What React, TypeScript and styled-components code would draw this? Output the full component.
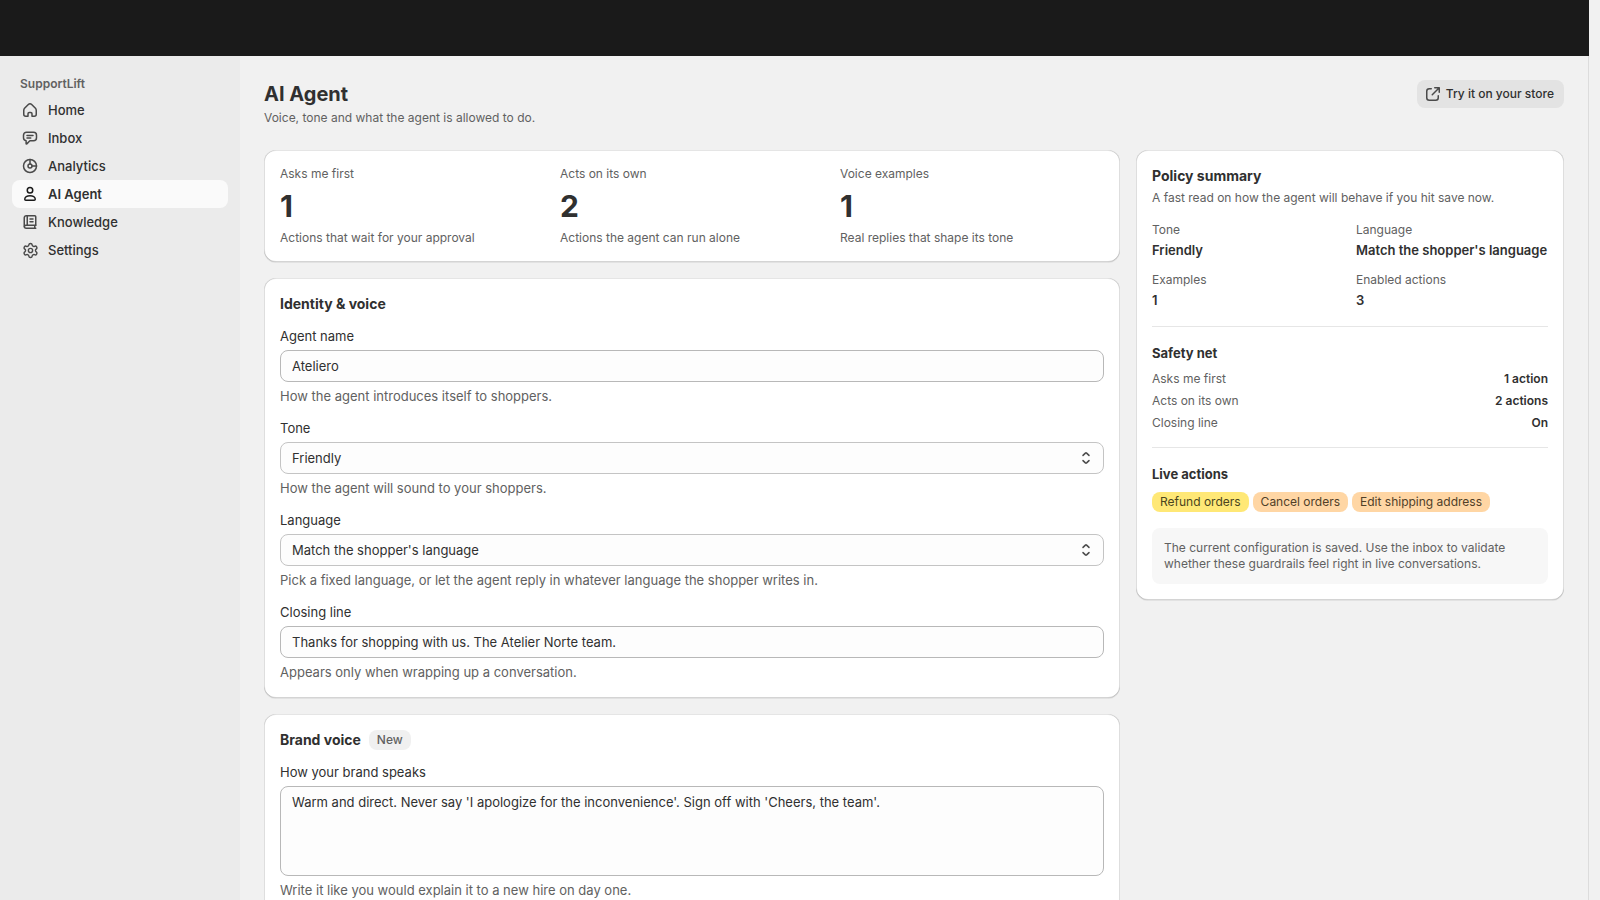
import React, { useState } from 'react';
import styled, { createGlobalStyle, css } from 'styled-components';
import { Settings } from 'lucide-react';

const color = {
  text: '#303030',
  muted: '#616161',
  icon: '#4a4a4a',
  page: '#f1f1f1',
  rail: '#ebebeb',
  line: '#e6e6e6',
};

const GlobalStyle = createGlobalStyle`
  *, *::before, *::after { box-sizing: border-box; }
  body {
    margin: 0;
    background: ${color.page};
    color: ${color.text};
    font: 400 13px/20px Inter, "Liberation Sans", sans-serif;
    -webkit-font-smoothing: antialiased;
  }
  h1, h2, h3, p, dl, dd, ul { margin: 0; padding: 0; }
  ul { list-style: none; }
`;

/* Frame */

const Shell = styled.div`
  display: flex;
  flex-direction: column;
  height: 100vh;
  padding-right: 11px;
`;

const TopBar = styled.header`
  flex: 0 0 56px;
  background: #1a1a1a;
`;

const Body = styled.div`
  display: flex;
  flex: 1;
  min-height: 0;
  border-right: 1px solid #dcdcdc;
`;

const Sidebar = styled.nav`
  flex: 0 0 240px;
  padding: 18px 12px;
  background: ${color.rail};
`;

const SidebarTitle = styled.h2`
  padding: 0 8px;
  margin-bottom: 2px;
  font-size: 12px;
  line-height: 20px;
  font-weight: 600;
  color: ${color.muted};
`;

const NavItem = styled.a<{ $active?: boolean }>`
  display: flex;
  align-items: center;
  gap: 8px;
  height: 28px;
  padding: 0 8px;
  border-radius: 8px;
  font-weight: 550;
  color: ${color.text};
  text-decoration: none;
  svg { color: ${color.icon}; }
  ${(p) => p.$active && css`
    background: #fafafa;
    font-weight: 600;
    svg { color: #1a1a1a; }
  `}
`;

const IconBox = styled.span`
  display: flex;
  align-items: center;
  justify-content: center;
  width: 20px;
  height: 20px;
`;

const Main = styled.main`
  flex: 1;
  min-width: 0;
  padding: 24px;
  overflow-y: auto;
  scrollbar-width: none;
`;

/* Page header */

const PageHeader = styled.header`
  display: flex;
  align-items: flex-start;
  justify-content: space-between;
  margin-bottom: 24px;
`;

const PageTitle = styled.h1`
  margin-bottom: 2px;
  font-size: 20px;
  line-height: 28px;
  font-weight: 650;
`;

const StoreButton = styled.button`
  display: flex;
  align-items: center;
  gap: 3px;
  height: 28px;
  padding: 0 10px 0 6px;
  border: 0;
  border-radius: 8px;
  background: #e3e3e3;
  color: ${color.text};
  font: inherit;
  font-size: 12px;
  font-weight: 550;
  svg { color: ${color.icon}; }
`;

/* Shared text */

const Caption = styled.p`
  font-size: 12px;
  line-height: 16px;
  color: ${color.muted};
`;

/* Cards */

const Columns = styled.div`
  display: grid;
  grid-template-columns: 2fr 1fr;
  align-items: start;
  gap: 16px;
`;

const Stack = styled.div`
  display: flex;
  flex-direction: column;
  gap: 16px;
  min-width: 0;
`;

const Card = styled.section`
  padding: 16px;
  border-radius: 12px;
  background: #fff;
  box-shadow:
    0 1px 0 rgba(26, 26, 26, 0.07),
    inset 1px 0 0 rgba(0, 0, 0, 0.13),
    inset -1px 0 0 rgba(0, 0, 0, 0.13),
    inset 0 -1px 0 rgba(0, 0, 0, 0.17),
    inset 0 1px 0 rgba(204, 204, 204, 0.5);
`;

const CardHead = styled.div`
  display: flex;
  align-items: center;
  gap: 8px;
`;

const CardTitle = styled.h2`
  font-size: 14px;
  line-height: 20px;
  font-weight: 650;
`;

const PanelHead = styled.header`
  display: flex;
  flex-direction: column;
  gap: 4px;
`;

const Stats = styled.dl`
  display: grid;
  grid-template-columns: repeat(3, 1fr);
  gap: 16px;
`;

const Stat = styled.div`
  display: flex;
  flex-direction: column;
  gap: 8px;
  font-size: 12px;
  line-height: 16px;
  color: ${color.muted};
`;

const StatValue = styled.dd`
  font-size: 30px;
  line-height: 32px;
  font-weight: 700;
  color: ${color.text};
`;

/* Form */

const Fields = styled.div`
  display: flex;
  flex-direction: column;
  gap: 12px;
  margin-top: 12px;
`;

const FieldBox = styled.div`
  display: flex;
  flex-direction: column;
  gap: 4px;
`;

const Help = styled.p`
  color: ${color.muted};
`;

const control = css`
  display: block;
  width: 100%;
  margin: 0;
  border: 1px solid #b8b8b8;
  border-radius: 8px;
  background: #fdfdfd;
  color: ${color.text};
  font: inherit;
  outline: none;
`;

const TextInput = styled.input`
  ${control}
  height: 32px;
  padding: 0 11px;
`;

const TextArea = styled.textarea`
  ${control}
  height: 90px;
  padding: 5px 11px;
  resize: none;
`;

const SelectBox = styled.div`
  position: relative;
  svg {
    position: absolute;
    top: 6px;
    right: 8px;
    color: ${color.icon};
    pointer-events: none;
  }
`;

const Select = styled.select`
  ${control}
  height: 32px;
  padding: 0 32px 0 11px;
  border-color: #c4c4c4;
  appearance: none;
`;

/* Policy panel */

const Facts = styled.dl`
  display: grid;
  grid-template-columns: repeat(2, minmax(0, 1fr));
  gap: 12px;
  margin: 16px 0;
`;

const Fact = styled.div`
  dt {
    margin-bottom: 2px;
    font-size: 12px;
    line-height: 16px;
    color: ${color.muted};
  }
  dd {
    font-weight: 600;
    white-space: nowrap;
  }
`;

const PanelSection = styled.section`
  padding: 16px 0;
  border-top: 1px solid ${color.line};
`;

const PanelTitle = styled.h3`
  margin-bottom: 8px;
  font-size: 13px;
  line-height: 20px;
  font-weight: 650;
`;

const Rows = styled.dl`
  display: flex;
  flex-direction: column;
  gap: 6px;
`;

const Row = styled.div`
  display: flex;
  justify-content: space-between;
  font-size: 12px;
  line-height: 16px;
  dt { color: ${color.muted}; }
  dd { font-weight: 600; }
`;

const Badges = styled.ul`
  display: flex;
  flex-wrap: wrap;
  gap: 4px;
`;

const tones = {
  neutral: ['#f0f0f0', '#616161'],
  caution: ['#ffe876', '#4a4520'],
  warning: ['#ffd6a4', '#504028'],
};

const Badge = styled.span<{ $tone: keyof typeof tones }>`
  display: block;
  padding: 2px 8px;
  border-radius: 8px;
  font-size: 12px;
  line-height: 16px;
  font-weight: ${(p) => (p.$tone === 'neutral' ? 500 : 400)};
  background: ${(p) => tones[p.$tone][0]};
  color: ${(p) => tones[p.$tone][1]};
`;

const Note = styled(Caption)`
  padding: 12px;
  border-radius: 8px;
  background: #f7f7f7;
`;

/* Icons, drawn on a 20 unit grid */

const Glyph = ({ children }: { children: React.ReactNode }) => (
  <svg width="20" height="20" viewBox="0 0 20 20" fill="none" stroke="currentColor"
    strokeWidth="1.5" strokeLinecap="round" strokeLinejoin="round" aria-hidden="true">
    {children}
  </svg>
);

const HomeIcon = () => (
  <Glyph>
    <path d="M8 16.25H5.75a2 2 0 0 1-2-2V10.4c0-.8.3-1.5.8-2.1l3.8-3.9a2.3 2.3 0 0 1 3.3 0l3.8 3.9c.5.6.8 1.3.8 2.1v3.85a2 2 0 0 1-2 2H12v-2.5a1.25 1.25 0 0 0-1.25-1.25h-1.5A1.25 1.25 0 0 0 8 13.75z" />
  </Glyph>
);

const InboxIcon = () => (
  <Glyph>
    <path d="M6.5 4.25h7a3 3 0 0 1 3 3v2.5a3 3 0 0 1-3 3h-3.6l-3.1 3.1a.4.4 0 0 1-.7-.3v-2.9a3 3 0 0 1-2.6-2.9v-2.5a3 3 0 0 1 3-3z" />
    <path d="M7 7.5h6M7 10h3.75" />
  </Glyph>
);

const AnalyticsIcon = () => (
  <Glyph>
    <circle cx="10" cy="10" r="6.5" />
    <circle cx="10" cy="10" r="2" />
    <path d="M10 3.5V8M12 10h4.5" />
  </Glyph>
);

const AgentIcon = () => (
  <Glyph>
    <circle cx="10" cy="6.25" r="2.75" />
    <path d="M4.75 15.2c0-2 2.3-3.45 5.25-3.45s5.25 1.45 5.25 3.45a1.05 1.05 0 0 1-1.05 1.05H5.8a1.05 1.05 0 0 1-1.05-1.05z" />
  </Glyph>
);

const KnowledgeIcon = () => (
  <Glyph>
    <path d="M15.75 13.25v-8.5a1 1 0 0 0-1-1h-8.5a2 2 0 0 0-2 2v8.5a2 2 0 0 0 2 2h9.5" />
    <path d="M7.25 3.75v9.5M4.4 14.25a1.8 1.8 0 0 1 1.7-1h9.65M14.75 13.25v3M10 7h3M10 9.75h3" />
  </Glyph>
);

const SettingsIcon = () => <Settings size={17} strokeWidth={2} />;

const ExternalIcon = () => (
  <Glyph>
    <path d="M11.75 3.75h4.5v4.5M16 4l-6.75 6.75M8.25 4.75h-2a2.5 2.5 0 0 0-2.5 2.5v6.5a2.5 2.5 0 0 0 2.5 2.5h6.5a2.5 2.5 0 0 0 2.5-2.5v-2" />
  </Glyph>
);

const SelectIcon = () => (
  <Glyph>
    <path d="M7 7.4l2.4-2.3a.9.9 0 0 1 1.2 0L13 7.4M7 12.6l2.4 2.3a.9.9 0 0 0 1.2 0l2.4-2.3" />
  </Glyph>
);

const nav = [
  { label: 'Home', Icon: HomeIcon },
  { label: 'Inbox', Icon: InboxIcon },
  { label: 'Analytics', Icon: AnalyticsIcon },
  { label: 'AI Agent', Icon: AgentIcon },
  { label: 'Knowledge', Icon: KnowledgeIcon },
  { label: 'Settings', Icon: SettingsIcon },
];

const stats = [
  ['Asks me first', '1', 'Actions that wait for your approval'],
  ['Acts on its own', '2', 'Actions the agent can run alone'],
  ['Voice examples', '1', 'Real replies that shape its tone'],
];

const rows = [
  ['Asks me first', '1 action'],
  ['Acts on its own', '2 actions'],
  ['Closing line', 'On'],
];

const Field = ({ id, label, help, children }: {
  id: string; label: string; help: string; children: React.ReactNode;
}) => (
  <FieldBox>
    <label htmlFor={id}>{label}</label>
    {children}
    <Help id={`${id}-help`}>{help}</Help>
  </FieldBox>
);

export default function App() {
  const [name, setName] = useState('Ateliero');
  const [tone, setTone] = useState('Friendly');
  const [language, setLanguage] = useState("Match the shopper's language");
  const [closing, setClosing] = useState('Thanks for shopping with us. The Atelier Norte team.');
  const [voice, setVoice] = useState(
    "Warm and direct. Never say 'I apologize for the inconvenience'. Sign off with 'Cheers, the team'.",
  );

  const facts = [
    ['Tone', tone],
    ['Language', language],
    ['Examples', '1'],
    ['Enabled actions', '3'],
  ];

  return (
    <>
      <GlobalStyle />
      <Shell>
        <TopBar />
        <Body>
          <Sidebar>
            <SidebarTitle>SupportLift</SidebarTitle>
            {nav.map(({ label, Icon }) => (
              <NavItem key={label} href="#" $active={label === 'AI Agent'}>
                <IconBox><Icon /></IconBox>
                {label}
              </NavItem>
            ))}
          </Sidebar>
          <Main>
            <PageHeader>
              <div>
                <PageTitle>AI Agent</PageTitle>
                <Caption>Voice, tone and what the agent is allowed to do.</Caption>
              </div>
              <StoreButton type="button"><ExternalIcon />Try it on your store</StoreButton>
            </PageHeader>
            <Columns>
              <Stack>
                <Card>
                  <Stats>
                    {stats.map(([label, value, note]) => (
                      <Stat key={label}>
                        <dt>{label}</dt>
                        <StatValue>{value}</StatValue>
                        <dd>{note}</dd>
                      </Stat>
                    ))}
                  </Stats>
                </Card>
                <Card>
                  <CardTitle>Identity &amp; voice</CardTitle>
                  <Fields>
                    <Field id="agent-name" label="Agent name" help="How the agent introduces itself to shoppers.">
                      <TextInput id="agent-name" value={name} onChange={(e) => setName(e.target.value)} />
                    </Field>
                    <Field id="tone" label="Tone" help="How the agent will sound to your shoppers.">
                      <SelectBox>
                        <Select id="tone" value={tone} onChange={(e) => setTone(e.target.value)}>
                          <option>Friendly</option>
                        </Select>
                        <SelectIcon />
                      </SelectBox>
                    </Field>
                    <Field id="language" label="Language" help="Pick a fixed language, or let the agent reply in whatever language the shopper writes in.">
                      <SelectBox>
                        <Select id="language" value={language} onChange={(e) => setLanguage(e.target.value)}>
                          <option>Match the shopper's language</option>
                        </Select>
                        <SelectIcon />
                      </SelectBox>
                    </Field>
                    <Field id="closing" label="Closing line" help="Appears only when wrapping up a conversation.">
                      <TextInput id="closing" value={closing} onChange={(e) => setClosing(e.target.value)} />
                    </Field>
                  </Fields>
                </Card>
                <Card>
                  <CardHead>
                    <CardTitle>Brand voice</CardTitle>
                    <Badge $tone="neutral">New</Badge>
                  </CardHead>
                  <Fields>
                    <Field id="voice" label="How your brand speaks" help="Write it like you would explain it to a new hire on day one.">
                      <TextArea id="voice" value={voice} onChange={(e) => setVoice(e.target.value)} />
                    </Field>
                  </Fields>
                </Card>
              </Stack>
              <Card as="aside">
                <PanelHead>
                  <CardTitle>Policy summary</CardTitle>
                  <Caption>A fast read on how the agent will behave if you hit save now.</Caption>
                </PanelHead>
                <Facts>
                  {facts.map(([label, value]) => (
                    <Fact key={label}><dt>{label}</dt><dd>{value}</dd></Fact>
                  ))}
                </Facts>
                <PanelSection>
                  <PanelTitle>Safety net</PanelTitle>
                  <Rows>
                    {rows.map(([label, value]) => (
                      <Row key={label}><dt>{label}</dt><dd>{value}</dd></Row>
                    ))}
                  </Rows>
                </PanelSection>
                <PanelSection>
                  <PanelTitle>Live actions</PanelTitle>
                  <Badges>
                    <li><Badge $tone="caution">Refund orders</Badge></li>
                    <li><Badge $tone="warning">Cancel orders</Badge></li>
                    <li><Badge $tone="warning">Edit shipping address</Badge></li>
                  </Badges>
                </PanelSection>
                <Note>The current configuration is saved. Use the inbox to validate whether these guardrails feel right in live conversations.</Note>
              </Card>
            </Columns>
          </Main>
        </Body>
      </Shell>
    </>
  );
}
